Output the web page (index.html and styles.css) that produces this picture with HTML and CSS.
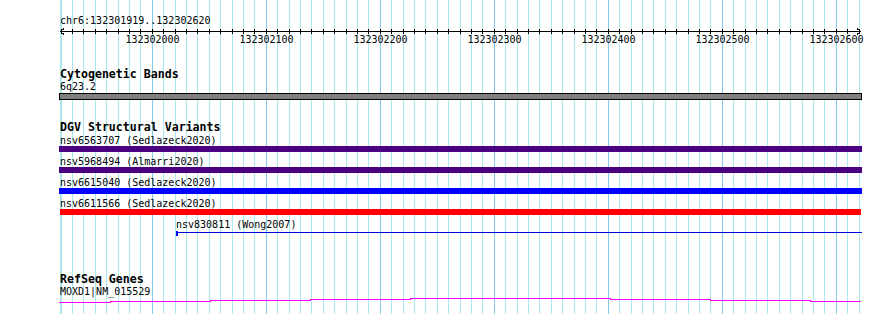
FILE: index.html
```html
<!DOCTYPE html>
<html lang="en">
  <head>
    <meta charset="utf-8" />
    <meta name="viewport" content="width=device-width, initial-scale=1" />
    <title>chr6:132301919..132302620</title>
    <link rel="stylesheet" href="styles.css">
  </head>
  <body>
    <div id="browser">
      <svg id="grid" width="890" height="314"></svg>
      <div id="view">
        <div class="locus">chr6:132301919..132302620</div>
        <svg id="ruler" width="812" height="20">
          <line class="axis" x1="0" y1="5.5" x2="801" y2="5.5" />
          <polyline class="axis" points="4,2.5 0.5,5.5 4,8.5" />
          <polyline class="axis" points="797,2.5 800.5,5.5 797,8.5" />
        </svg>

        <section class="track bands">
          <h2>Cytogenetic Bands</h2>
          <div class="label">6q23.2</div>
          <div class="band"></div>
        </section>

        <section class="track variants">
          <h2>DGV Structural Variants</h2>
          <div class="row">
            <div class="label">nsv6563707 (Sedlazeck2020)</div>
            <div class="bar purple"></div>
          </div>
          <div class="row">
            <div class="label">nsv5968494 (Almarri2020)</div>
            <div class="bar purple"></div>
          </div>
          <div class="row">
            <div class="label">nsv6615040 (Sedlazeck2020)</div>
            <div class="bar blue"></div>
          </div>
          <div class="row">
            <div class="label">nsv6611566 (Sedlazeck2020)</div>
            <div class="bar red"></div>
          </div>
          <div class="row" style="margin-left: 116px">
            <div class="label">nsv830811 (Wong2007)</div>
            <div class="span"></div>
          </div>
        </section>

        <section class="track genes">
          <h2>RefSeq Genes</h2>
          <div class="label">MOXD1|NM_015529</div>
          <svg class="gene" width="803" height="6">
            <path d="M0 5.5 H51 V4.5 H151 V3.5 H251 V2.5 H351 V1.5 H551 V2.5 H651 V3.5 H751 V4.5 H802" />
          </svg>
        </section>
      </div>
    </div>
    <script type="text/javascript">
      const NS = "http://www.w3.org/2000/svg";
      const grid = document.getElementById("grid");
      const ruler = document.getElementById("ruler");

      const start = 132301919;
      const end = 132302620;
      const scale = 1.14;
      const left = 60;

      function toX(bp) {
        return Math.floor((bp - start) * scale);
      }

      function add(parent, tag, attrs, text) {
        const el = document.createElementNS(NS, tag);
        for (const key in attrs) el.setAttribute(key, attrs[key]);
        if (text !== undefined) el.textContent = text;
        parent.appendChild(el);
        return el;
      }

      add(grid, "line", { x1: left + 0.5, x2: left + 0.5, y1: 0, y2: 314, class: "minor" });

      for (let bp = Math.ceil(start / 10) * 10; bp <= end; bp += 10) {
        const x = toX(bp) + 0.5;
        const major = bp % 100 === 0;
        add(grid, "line", {
          x1: left + x, x2: left + x, y1: 0, y2: 314,
          class: major ? "major" : "minor",
        });
        add(ruler, "line", { x1: x, x2: x, y1: 3, y2: 8, class: "tick" });
        if (major) add(ruler, "text", { x: x, y: 17, class: "tick-label" }, bp);
      }
    </script>
  </body>
</html>
```

FILE: styles.css
```css
html,
body {
  margin: 0;
  padding: 0;
}

body {
  background-color: white;
  color: black;
  font-family: "DejaVu Sans Mono", monospace;
  font-size: 10px;
}

#browser {
  position: relative;
  width: 890px;
  height: 314px;
  overflow: hidden;
}

#grid {
  position: absolute;
  top: 0;
  left: 0;
}

#grid line {
  shape-rendering: crispEdges;
}

#grid .minor {
  stroke: #aae8ee;
}

#grid .major {
  stroke: #84c8ee;
}

#view {
  position: relative;
  margin-left: 60px;
  width: 802px;
  padding-top: 16px;
}

.locus,
.label {
  height: 10px;
  line-height: 10px;
  white-space: nowrap;
}

#ruler {
  display: block;
  overflow: visible;
}

#ruler .axis,
#ruler .tick {
  stroke: black;
  fill: none;
  shape-rendering: crispEdges;
}

#ruler .tick-label {
  font-family: "DejaVu Sans Mono", monospace;
  font-size: 10px;
  text-anchor: middle;
}

.track h2 {
  margin: 0;
  height: 12px;
  font-size: 11.6px;
  line-height: 12px;
  font-weight: bold;
  white-space: nowrap;
}

/* line-height a bit over the box height drops the text by 1px */
.track .label {
  margin-top: 1px;
  line-height: 12px;
}

.bands {
  margin-top: 22px;
}

.band {
  box-sizing: border-box;
  margin: 2px 0 0 -1px;
  width: 803px;
  height: 7px;
  background-color: #808080;
  border: 1px solid black;
}

.variants {
  margin-top: 21px;
  padding-bottom: 4px;
}

.variants h2 {
  margin-bottom: 2px;
}

.row + .row {
  margin-top: 4px;
}

.bar {
  margin: 1px 0 0 -1px;
  width: 803px;
  height: 6px;
}

.purple {
  background-color: #4b0082;
}

.blue {
  background-color: #0000ff;
}

.red {
  margin-left: 0;
  width: 801px;
  background-color: #ff0000;
}

.span {
  margin-top: 1px;
  height: 6px;
  background:
    linear-gradient(#0000ff, #0000ff) 0 1px / 2px 5px no-repeat,
    linear-gradient(#0000dd, #0000dd) 0 2px / 100% 1px no-repeat;
}

.genes {
  margin-top: 33px;
}

.gene {
  display: block;
  margin: 1px 0 0 -1px;
}

.gene path {
  fill: none;
  stroke: #ff00ff;
  shape-rendering: crispEdges;
}
```
